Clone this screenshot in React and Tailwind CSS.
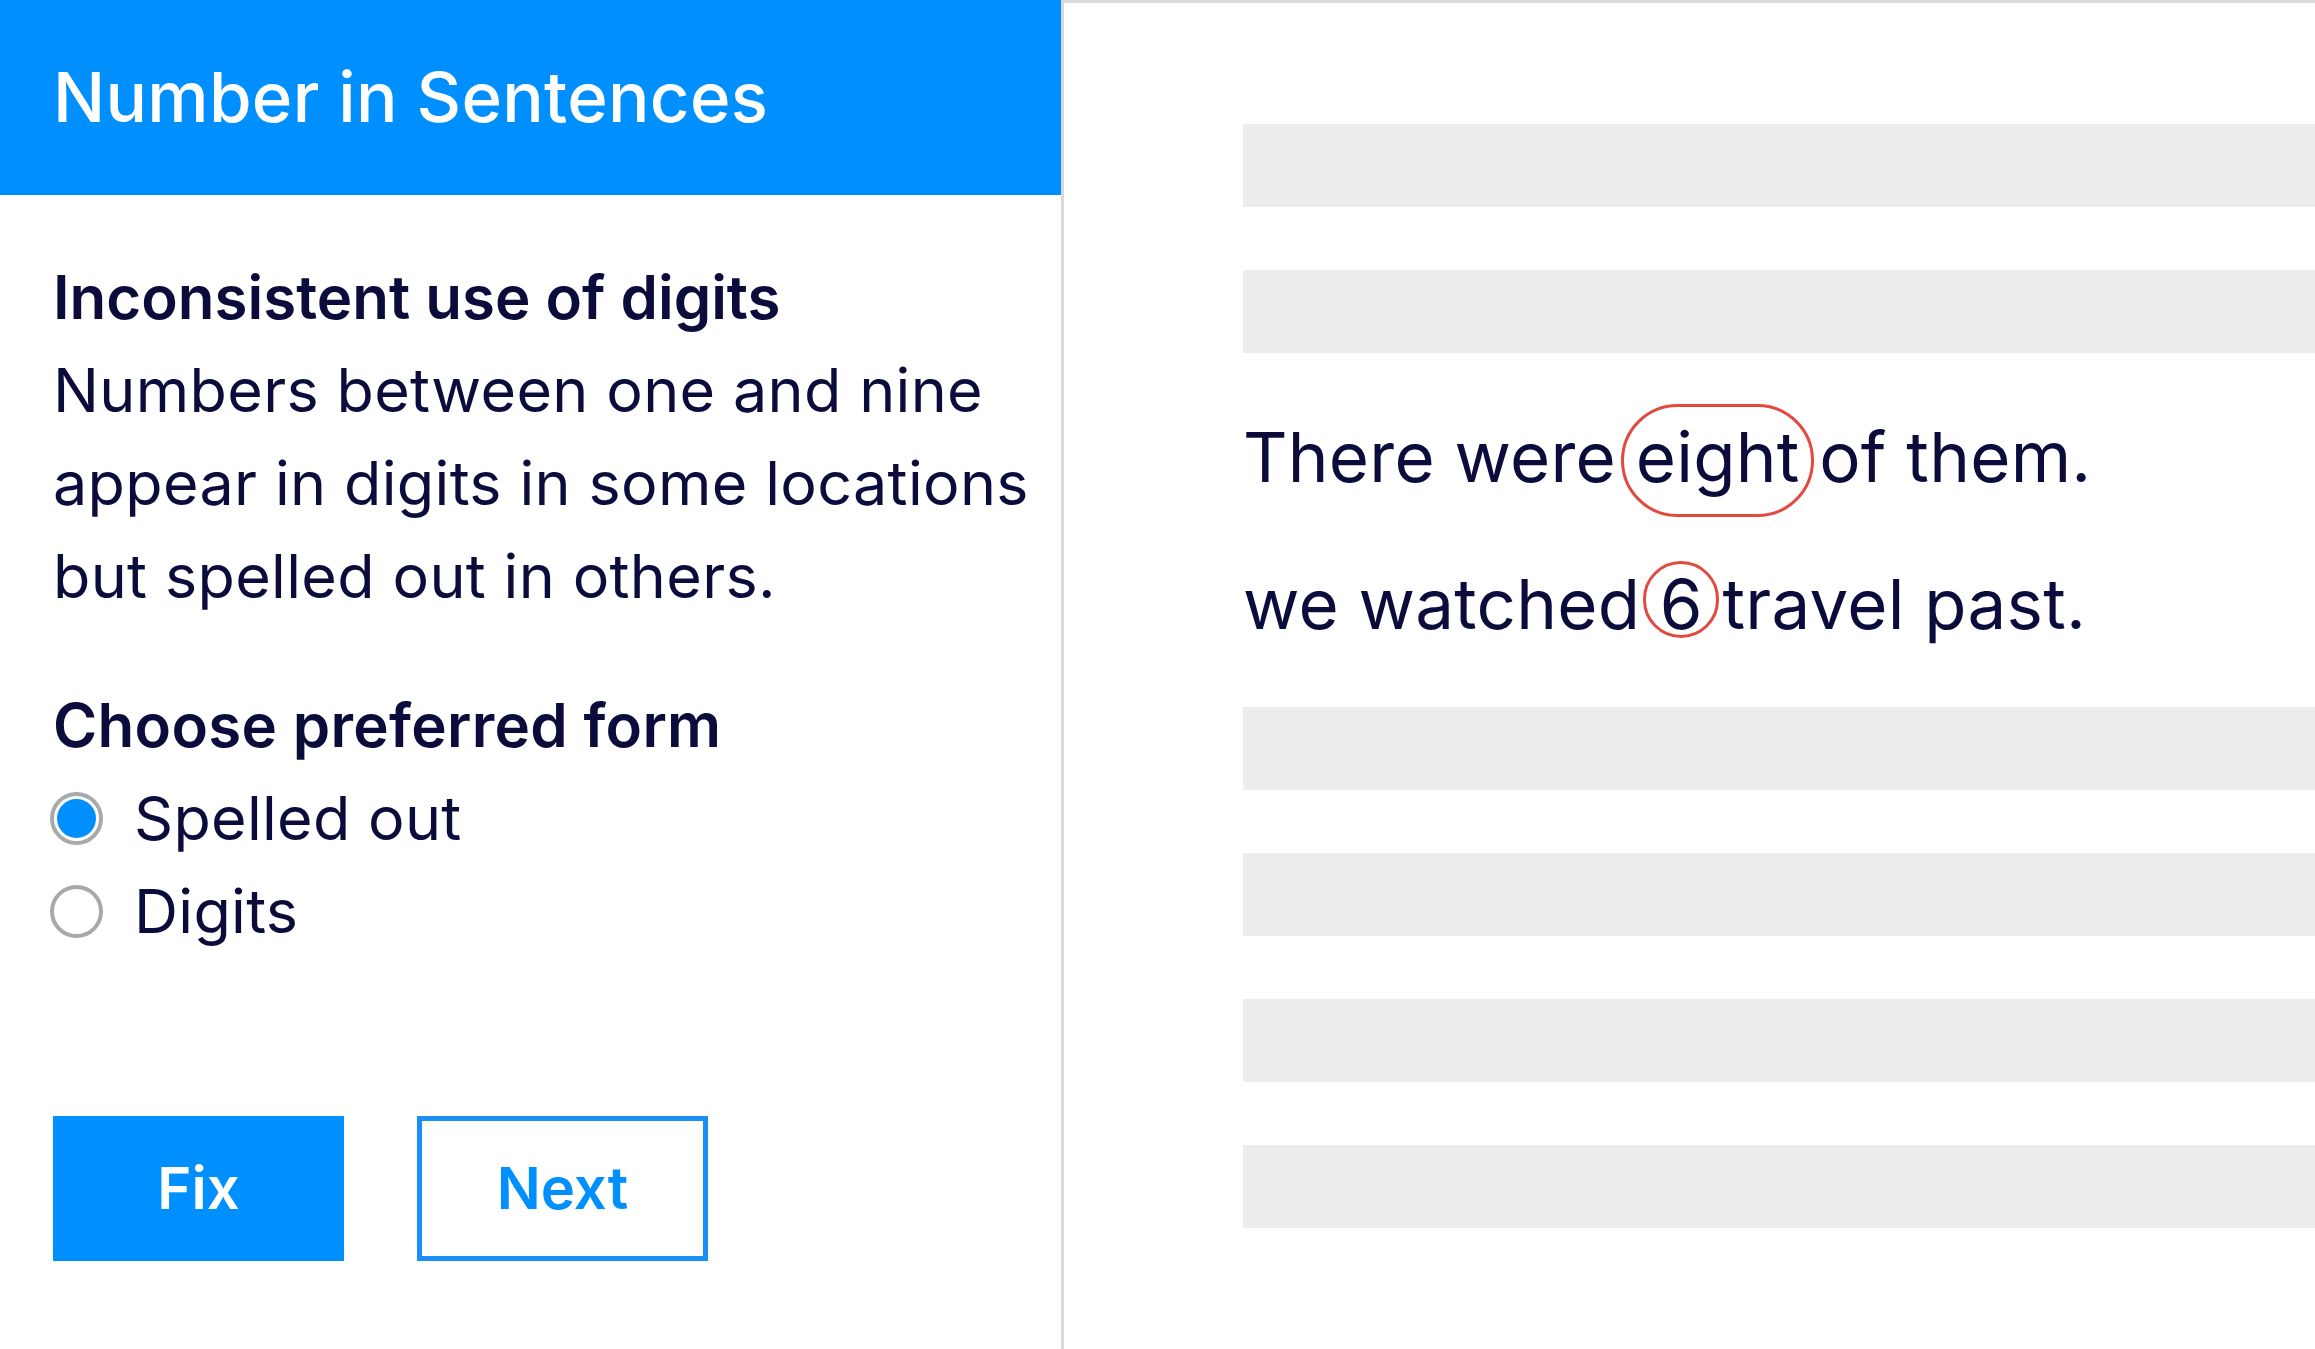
export default function App() {
  return (
    <div className="flex h-[1349px] w-[2315px] overflow-hidden bg-white font-['Inter',sans-serif] text-[#0b0c3b]">
      {/* left panel */}
      <div className="flex w-[1061px] shrink-0 flex-col">
        <div className="flex h-[195px] shrink-0 items-center bg-[#008fff] px-[53px]">
          <h1 className="text-[69px] font-medium tracking-[0.3px] text-white">Number in Sentences</h1>
        </div>

        <div className="whitespace-nowrap pl-[53px] pt-[56px]">
          <h2 className="text-[60px] font-semibold leading-[93px]">Inconsistent use of digits</h2>
          <p className="text-[61px] leading-[93px] tracking-[0.35px]">
            Numbers between one and nine
            <br />
            appear in digits in some locations
            <br />
            but spelled out in others.
          </p>

          <h3 className="mt-[56px] text-[60px] font-semibold leading-[93px] tracking-[0.3px]">Choose preferred form</h3>

          <div className="flex flex-col">
            <label className="-ml-[3px] flex items-center gap-[31px] text-[61px] leading-[93px] tracking-[0.3px]">
              <span className="flex h-[53px] w-[53px] items-center justify-center rounded-full border-[4px] border-[#a9a9a9]">
                <span className="h-[39px] w-[39px] rounded-full bg-[#008fff]" />
              </span>
              Spelled out
            </label>
            <label className="-ml-[3px] flex items-center gap-[31px] text-[61px] leading-[93px] tracking-[0.3px]">
              <span className="h-[53px] w-[53px] rounded-full border-[4px] border-[#a9a9a9]" />
              Digits
            </label>
          </div>

          <div className="mt-[158px] flex gap-[73px]">
            <button className="flex h-[145px] w-[291px] items-center justify-center bg-[#008fff] text-[58px] font-semibold text-white">
              Fix
            </button>
            <button className="flex h-[145px] w-[291px] items-center justify-center border-[5px] border-[#1a8ff5] text-[58px] font-semibold text-[#008fff]">
              Next
            </button>
          </div>
        </div>
      </div>

      {/* right panel */}
      <div className="flex-1 border-l-[3px] border-t-[3px] border-[#d9d9d9] pl-[179px] pt-[121px]">
        <div className="flex flex-col gap-[63px]">
          <div className="h-[83px] bg-[#ededed]" />
          <div className="h-[83px] bg-[#ededed]" />
        </div>

        <div className="mt-[31px] whitespace-nowrap text-[69px] leading-[147px] tracking-[0.25px]">
          <p>
            There were{" "}
            <span className="relative inline-block">
              eight
              <span className="absolute -left-[15px] -right-[14px] top-[20px] bottom-[14px] rounded-full border-[3px] border-[#e24a40]" />
            </span>{" "}
            of them.
          </p>
          <p>
            we watched{" "}
            <span className="relative inline-block">
              6
              <span className="absolute left-1/2 top-[30px] h-[77px] w-[76px] -translate-x-1/2 rounded-full border-[3px] border-[#e24a40]" />
            </span>{" "}
            travel past.
          </p>
        </div>

        <div className="mt-[29px] flex flex-col gap-[63px]">
          <div className="h-[83px] bg-[#ededed]" />
          <div className="h-[83px] bg-[#ededed]" />
          <div className="h-[83px] bg-[#ededed]" />
          <div className="h-[83px] bg-[#ededed]" />
        </div>
      </div>
    </div>
  );
}
